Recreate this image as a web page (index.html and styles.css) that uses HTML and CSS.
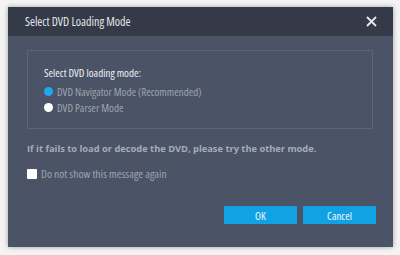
FILE: index.html
```html
<!DOCTYPE html>
<html>
<head>
<meta charset="utf-8">
<link rel="stylesheet" href="styles.css">
</head>
<body>
<div class="dialog">
  <div class="titlebar">
    <span class="title">Select DVD Loading Mode</span>
    <svg class="close" width="11" height="11" viewBox="0 0 11 11"><path d="M1 1 L10 10 M10 1 L1 10" stroke="#e6e8ec" stroke-width="1.8" fill="none"/></svg>
  </div>
  <div class="content">
    <div class="group">
      <div class="group-label">Select DVD loading mode:</div>
      <div class="radio-row"><span class="radio checked"></span><span class="radio-text">DVD Navigator Mode (Recommended)</span></div>
      <div class="radio-row"><span class="radio"></span><span class="radio-text">DVD Parser Mode</span></div>
    </div>
    <div class="hint">If it fails to load or decode the DVD, please try the other mode.</div>
    <div class="check-row"><span class="checkbox"></span><span class="check-text">Do not show this message again</span></div>
    <div class="buttons">
      <button class="btn">OK</button>
      <button class="btn">Cancel</button>
    </div>
  </div>
</div>
</body>
</html>
```
FILE: styles.css
```css
html, body { margin: 0; padding: 0; }
body {
  background: #f4f4f4;
  width: 400px; height: 255px; overflow: hidden;
  font-family: "Open Sans", "Noto Sans", sans-serif;
  font-stretch: 80%;
}
.dialog {
  margin: 7px 0 0 8px;
  width: 385px;
  height: 240px;
  background: #4b5366;
  display: flex;
  flex-direction: column;
  box-shadow: 0 0 5px rgba(0,0,0,0.35);
}
.titlebar {
  height: 29px;
  background: #343a48;
  display: flex;
  align-items: center;
  justify-content: space-between;
  padding: 0 16px 0 17px;
}
.title { color: #e4e6ea; font-size: 12px; font-stretch: 75%; }
.close { display: block; }
.content { flex: 1; padding: 14px 17px 0 19px; display: flex; flex-direction: column; }
.group {
  width: 346px;
  height: 79px;
  border: 1px solid #5c6477;
  padding: 0 0 0 16px;
  box-sizing: border-box;
}
.group-label { color: #eef0f3; font-size: 11px; margin-top: 15px; height: 14px; line-height: 14px; }
.radio-row { display: flex; align-items: center; height: 15px; margin-top: 1px; }
.group-label + .radio-row { margin-top: 4px; }
.radio { width: 9px; height: 9px; border-radius: 50%; background: #ffffff; margin-right: 4px; }
.radio.checked { background: #1ea7ea; }
.radio-text { color: #9ea4b0; font-size: 11px; line-height: 15px; }
.hint { color: #a6acb8; font-size: 9.3px; font-weight: bold; font-stretch: 100%; margin-top: 13px; line-height: 14px; }
.check-row { display: flex; align-items: center; margin-top: 12px; height: 12px; }
.checkbox { width: 10px; height: 10px; background: #fff; border-radius: 1px; margin-right: 4px; }
.check-text { color: #9ea4b0; font-size: 11.5px; line-height: 12px; }
.buttons { display: flex; justify-content: flex-end; gap: 6px; margin-top: 26px; }
.btn {
  width: 73px; height: 18px;
  background: #10a2e2;
  border: none;
  border-radius: 1px;
  color: #f0f6fa;
  font-family: "Open Sans", "Noto Sans", sans-serif;
  font-stretch: 80%;
  font-size: 11px;
  padding: 0;
}
```
